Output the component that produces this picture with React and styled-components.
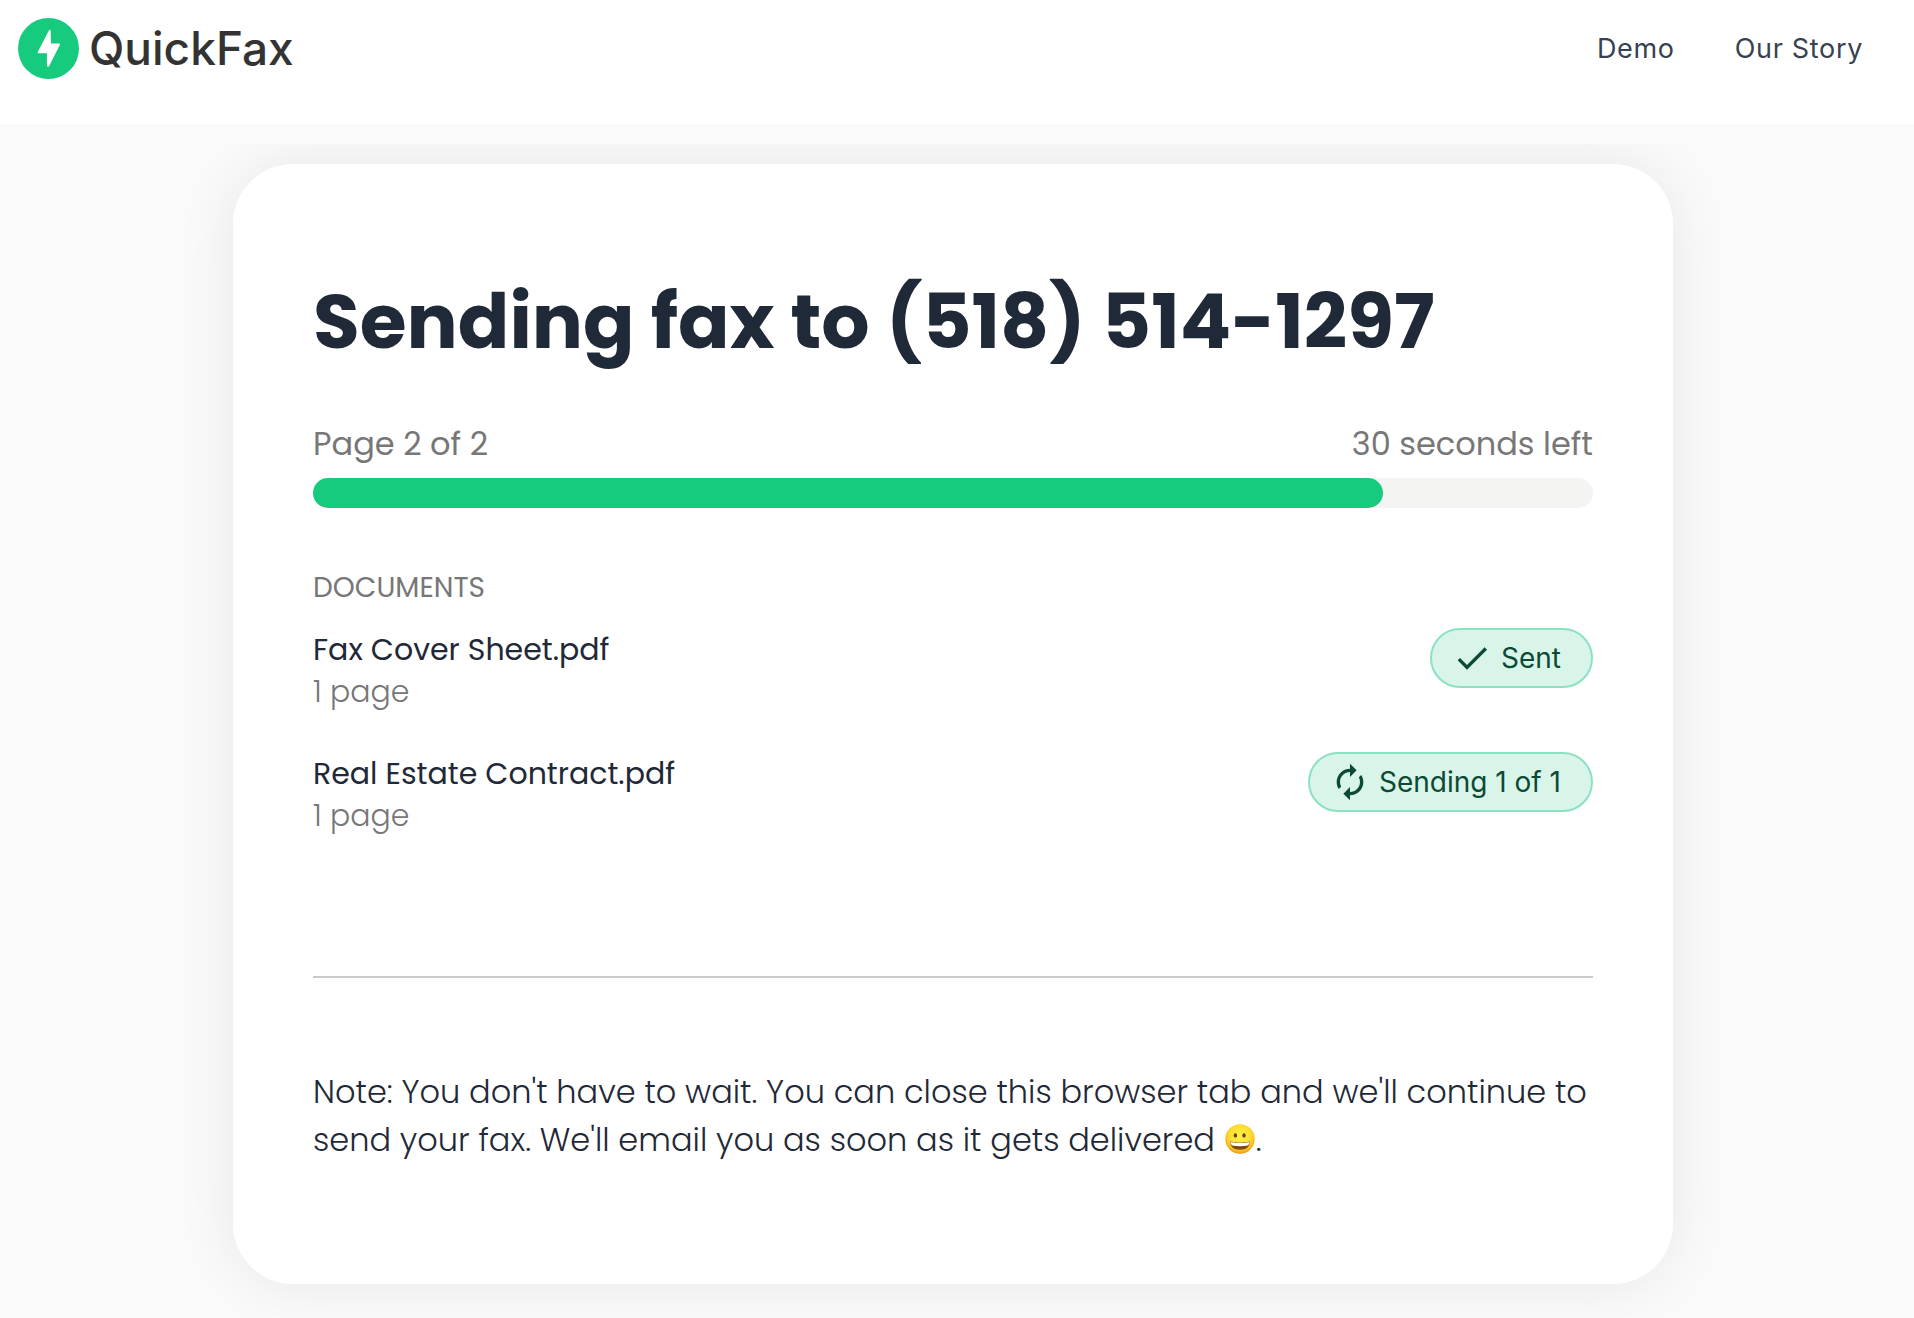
import { useState } from 'react';
import styled, { createGlobalStyle } from 'styled-components';
import { MdAutorenew, MdCheck } from 'react-icons/md';

const DOCUMENTS = [
  { id: 1, name: 'Fax Cover Sheet.pdf', pages: '1 page', status: 'Sent', done: true },
  { id: 2, name: 'Real Estate Contract.pdf', pages: '1 page', status: 'Sending 1 of 1', done: false },
];

function Logo() {
  return (
    <svg width="61" height="61" viewBox="0 0 61 61" aria-hidden="true">
      <circle cx="30.5" cy="30.5" r="30.5" fill="#16cb7d" />
      <path
        d="M31 12.3 Q31.8 11.2 32.6 12.3 L33 25.5 L41.3 25.5 Q42.4 25.7 41.9 26.8 L31.2 48 Q30.2 49.6 29 48 L28.9 35.2 L20.2 35.2 Q19.3 35 19.8 34 Z"
        fill="#fff"
      />
    </svg>
  );
}

function Smiley() {
  return (
    <Emoji viewBox="0 0 30 30" aria-hidden="true">
      <defs>
        <radialGradient id="face" cx="0.5" cy="0.4" r="0.62">
          <stop offset="0" stopColor="#fff04a" />
          <stop offset="0.6" stopColor="#fddd33" />
          <stop offset="0.85" stopColor="#f9b51d" />
          <stop offset="1" stopColor="#ee8a0c" />
        </radialGradient>
      </defs>
      <circle cx="15" cy="15" r="14.7" fill="url(#face)" />
      <ellipse cx="10.4" cy="11.4" rx="1.7" ry="2.2" fill="#6b4008" />
      <ellipse cx="19" cy="11.4" rx="1.7" ry="2.2" fill="#6b4008" />
      <path d="M5 17.6 Q15 19.8 25 17.6 Q24.6 25.8 15 25.8 Q5.4 25.8 5 17.6 Z" fill="#7d4a0b" />
      <path d="M5.4 18 Q15 20 24.6 18 Q24.4 20.8 22.8 21.6 Q15 23 7.2 21.6 Q5.6 20.8 5.4 18 Z" fill="#fff" />
    </Emoji>
  );
}

function DocumentRow({ data }) {
  return (
    <Row>
      <div>
        <FileName>{data.name}</FileName>
        <Pages>{data.pages}</Pages>
      </div>
      <Badge>
        {data.done ? <MdCheck size={40} /> : <MdAutorenew size={40} />}
        {data.status}
      </Badge>
    </Row>
  );
}

function App() {
  const [progress] = useState(83.6);

  return (
    <>
      <GlobalStyle />
      <Header>
        <Brand href="#">
          <Logo />
          QuickFax
        </Brand>
        <Nav>
          <NavLink href="#demo">Demo</NavLink>
          <NavLink href="#story">Our Story</NavLink>
        </Nav>
      </Header>
      <Main>
        <Card>
          <Title>Sending fax to (518) 514-1297</Title>
          <Meta>
            <span>Page 2 of 2</span>
            <span>30 seconds left</span>
          </Meta>
          <Track role="progressbar" aria-label="Fax progress" aria-valuenow={progress}>
            <Bar style={{ width: `${progress}%` }} />
          </Track>
          <Label>DOCUMENTS</Label>
          <List>
            {DOCUMENTS.map((element) => (
              <DocumentRow key={element.id} data={element} />
            ))}
          </List>
          <Divider />
          <Note>
            Note: You don't have to wait. You can close this browser tab and we'll continue to send
            your fax. We'll email you as soon as it gets delivered <Smiley />.
          </Note>
        </Card>
      </Main>
    </>
  );
}

const GlobalStyle = createGlobalStyle`
  * {
    box-sizing: border-box;
  }
  body {
    margin: 0;
    background-color: #fafafa;
    color: #1f2937;
    font-family: Poppins, Inter, sans-serif;
  }
`;
const Header = styled.header`
  display: flex;
  justify-content: space-between;
  align-items: flex-start;
  padding: 17px 51px 44px 18px;
  background-color: white;
`;
const Brand = styled.a`
  display: flex;
  align-items: center;
  gap: 10px;
  color: #333;
  font-family: Inter, sans-serif;
  font-size: 46px;
  font-weight: 500;
  line-height: 63px;
  text-decoration: none;
`;
const Nav = styled.nav`
  display: flex;
  gap: 60px;
`;
const NavLink = styled.a`
  color: #374151;
  font-family: Inter, sans-serif;
  font-size: 27px;
  line-height: 63px;
  letter-spacing: 0.025em;
  text-decoration: none;
`;
const Main = styled.main`
  margin-top: 20px;
  padding: 20px 8px 34px 0;
  overflow: hidden;
`;
const Card = styled.section`
  max-width: 1440px;
  margin: 0 auto;
  padding: 98px 80px 120px;
  border-radius: 60px;
  background-color: white;
  box-shadow: 0 0 60px rgba(0, 0, 0, 0.08);
`;
const Title = styled.h1`
  margin: 0 0 38px;
  font-size: 76px;
  font-weight: 700;
  line-height: 120px;
`;
const Meta = styled.div`
  display: flex;
  justify-content: space-between;
  margin-bottom: 10px;
  color: #777;
  font-size: 32px;
  line-height: 48px;
`;
const Track = styled.div`
  height: 30px;
  border-radius: 15px;
  background-color: #f4f4f3;
`;
const Bar = styled.div`
  height: 100%;
  border-radius: 15px;
  background-color: #16cb7d;
`;
const Label = styled.h2`
  margin: 60px 0 20px;
  color: #777;
  font-size: 28px;
  font-weight: 400;
  line-height: 40px;
`;
const List = styled.ul`
  display: flex;
  flex-direction: column;
  gap: 40px;
  margin: 0;
  padding: 0;
  list-style: none;
`;
const Row = styled.li`
  display: flex;
  justify-content: space-between;
  align-items: flex-start;
`;
const FileName = styled.div`
  font-size: 30px;
  line-height: 44px;
`;
const Pages = styled.div`
  color: #777;
  font-size: 30px;
  font-weight: 300;
  line-height: 40px;
`;
const Badge = styled.div`
  display: flex;
  align-items: center;
  gap: 9px;
  height: 60px;
  padding: 0 30px 0 20px;
  border: 2px solid #8ae2c0;
  border-radius: 30px;
  background-color: #d9f5e9;
  color: #0c4a36;
  font-family: Inter, sans-serif;
  font-size: 28px;
`;
const Divider = styled.hr`
  margin: 140px 0 90px;
  border: none;
  border-top: 2px solid #cacaca;
`;
const Note = styled.p`
  margin: 0;
  font-size: 32px;
  font-weight: 300;
  line-height: 48px;
`;
const Emoji = styled.svg`
  width: 30px;
  height: 30px;
  margin: 0 1px;
  vertical-align: -3px;
`;

export default App;
